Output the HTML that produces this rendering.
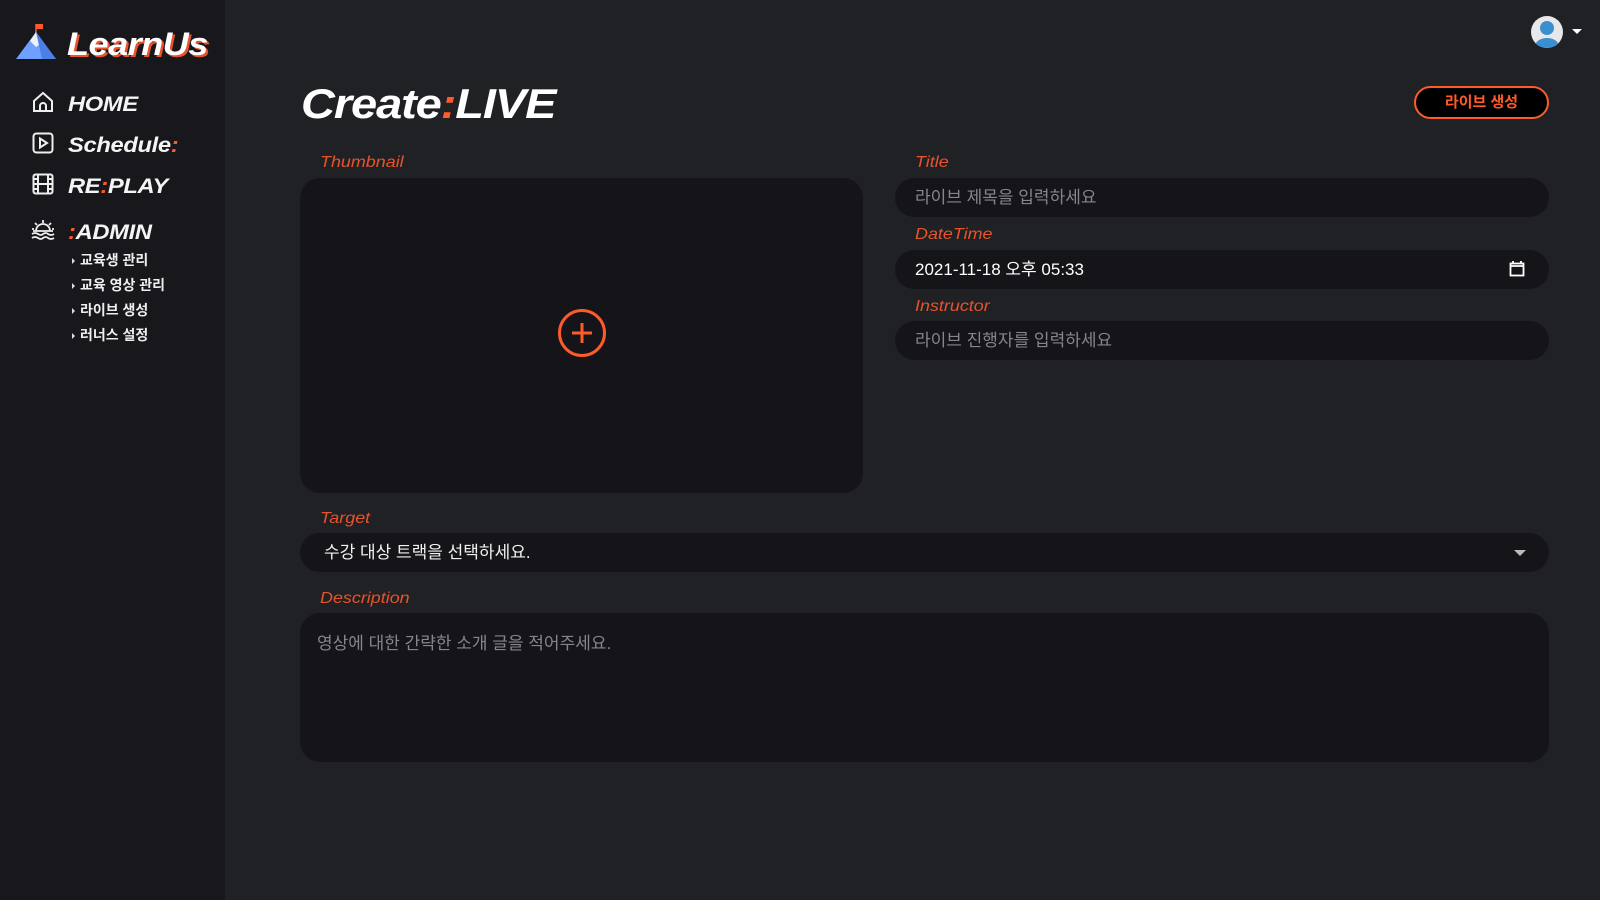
<!DOCTYPE html>
<html><head><meta charset="utf-8">
<style>
*{margin:0;padding:0;box-sizing:border-box}
body{width:1600px;height:900px;background:#202125;font-family:"Liberation Sans","Noto Sans CJK KR",sans-serif;position:relative;overflow:hidden;color:#fff}
.side{position:absolute;left:0;top:0;width:225px;height:900px;background:#18171c}
.abs{position:absolute}
.sx{transform-origin:left center}
.logo{left:67px;top:26px;font-size:32px;font-weight:900;font-style:italic;color:#fff;text-shadow:2px 2px 0 #e8532c;letter-spacing:-0.5px;transform:scaleX(1.13)}
.nav{left:68px;font-size:21px;font-weight:900;font-style:italic;color:#f4f4f4;letter-spacing:-0.3px;transform:scaleX(1.13)}
.o{color:#ff5a2a}
.sub{left:72px;font-size:14px;font-weight:bold;color:#eee}
.sub:before{content:"";display:inline-block;border-left:3px solid #ddd;border-top:3px solid transparent;border-bottom:3px solid transparent;margin-right:5px;vertical-align:middle}
.lbl{font-size:16px;font-style:italic;color:#e8532c;transform:scaleX(1.12)}
.box{background:#151419}
.inp{height:39px;border-radius:20px;font-size:17px;line-height:39px;padding-left:20px;color:#85868b}
.title{left:301px;top:80px;font-size:42px;font-weight:900;font-style:italic;color:#fff;letter-spacing:-1px;transform:scaleX(1.12)}
.btn{left:1414px;top:86px;width:135px;height:33px;border:2px solid #ff5a2a;border-radius:17px;background:#000;color:#ff5a2a;font-size:15px;font-weight:bold;text-align:center;line-height:29px}
</style></head><body>
<div class="side"></div>
<svg class="abs" style="left:16px;top:22px" width="42" height="38" viewBox="0 0 42 38">
<rect x="20" y="2" width="7" height="5" fill="#ff5a2a"/><line x1="20" y1="2" x2="20" y2="12" stroke="#ff5a2a" stroke-width="1.5"/>
<polygon points="20,10 40,37 0,37" fill="#6fa0ff"/><polygon points="20,10 27,20 20,25 14,19" fill="#f0f0f8"/><polygon points="20,10 40,37 26,37" fill="#4d7fe8"/>
</svg>
<div class="abs logo sx">LearnUs</div>

<svg class="abs" style="left:32px;top:91px" width="22" height="22" viewBox="0 0 22 22" fill="none" stroke="#eee" stroke-width="2"><path d="M2 10 L11 2 L20 10 V20 H2 Z"/><path d="M8 20 V15 a3 3 0 0 1 6 0 V20"/></svg>
<div class="abs nav sx" style="top:93px">HOME</div>
<svg class="abs" style="left:32px;top:132px" width="22" height="22" viewBox="0 0 22 22" fill="none" stroke="#eee" stroke-width="2"><rect x="1.5" y="1.5" width="19" height="19" rx="3"/><path d="M8 6.5 L15 11 L8 15.5 Z"/></svg>
<div class="abs nav sx" style="top:134px">Schedule<span class="o">:</span></div>
<svg class="abs" style="left:32px;top:173px" width="22" height="22" viewBox="0 0 22 22" fill="none" stroke="#eee" stroke-width="2"><rect x="1.5" y="1.5" width="19" height="19" rx="2"/><path d="M6 2 V20 M16 2 V20 M6 11 H16 M2 6 H6 M2 11 H6 M2 16 H6 M16 6 H20 M16 11 H20 M16 16 H20"/></svg>
<div class="abs nav sx" style="top:175px">RE<span class="o">:</span>PLAY</div>
<svg class="abs" style="left:31px;top:219px" width="24" height="22" viewBox="0 0 24 22" fill="none" stroke="#eee" stroke-width="1.8"><path d="M5 12 a7 7 0 0 1 14 0 M12 1 V4 M4 4 L6 6 M20 4 L18 6 M1 10 H3 M21 10 H23 M1 15 Q4 13 7 15 Q10 17 12 15 Q15 13 17 15 Q20 17 23 15 M1 19 Q4 17 7 19 Q10 21 12 19 Q15 17 17 19 Q20 21 23 19 M2 12 H22"/></svg>
<div class="abs nav sx" style="top:221px"><span class="o">:</span>ADMIN</div>
<div class="abs sub" style="top:250px">교육생 관리</div>
<div class="abs sub" style="top:275px">교육 영상 관리</div>
<div class="abs sub" style="top:300px">라이브 생성</div>
<div class="abs sub" style="top:325px">러너스 설정</div>

<svg class="abs" style="left:1531px;top:16px" width="60" height="33" viewBox="0 0 60 33"><circle cx="16" cy="16" r="16" fill="#e8e8ea"/><clipPath id="c"><circle cx="16" cy="16" r="16"/></clipPath><g clip-path="url(#c)" fill="#3a8fd0"><circle cx="16" cy="12" r="7"/><ellipse cx="16" cy="30" rx="12" ry="8"/></g><polygon points="41,13 51,13 46,18" fill="#fff"/></svg>

<div class="abs title sx">Create<span class="o">:</span>LIVE</div>
<div class="abs btn">라이브 생성</div>

<div class="abs lbl sx" style="left:320px;top:154px">Thumbnail</div>
<div class="abs box" style="left:300px;top:178px;width:563px;height:315px;border-radius:20px"></div>
<svg class="abs" style="left:556px;top:307px" width="52" height="52" viewBox="0 0 52 52" fill="none" stroke="#ff5a2a" stroke-width="3"><circle cx="26" cy="26" r="22.5"/><path d="M26 16 V36 M16 26 H36"/></svg>

<div class="abs lbl sx" style="left:915px;top:154px">Title</div>
<div class="abs box inp" style="left:895px;top:178px;width:654px">라이브 제목을 입력하세요</div>
<div class="abs lbl sx" style="left:915px;top:226px">DateTime</div>
<div class="abs box inp" style="left:895px;top:250px;width:654px;color:#fff">2021-11-18 오후 05:33</div>
<svg class="abs" style="left:1509px;top:260px" width="16" height="17" viewBox="0 0 16 17" fill="none" stroke="#fff" stroke-width="1.8"><rect x="1.5" y="3.5" width="13" height="12"/><path d="M1.5 6 H14.5 M4 1 V4 M12 1 V4"/></svg>
<div class="abs lbl sx" style="left:915px;top:298px">Instructor</div>
<div class="abs box inp" style="left:895px;top:321px;width:654px">라이브 진행자를 입력하세요</div>

<div class="abs lbl sx" style="left:320px;top:510px">Target</div>
<div class="abs box inp" style="left:300px;top:533px;width:1249px;color:#f0f0f0;padding-left:24px">수강 대상 트랙을 선택하세요.</div>
<svg class="abs" style="left:1514px;top:550px" width="12" height="7"><polygon points="0,0 12,0 6,6" fill="#bbb"/></svg>

<div class="abs lbl sx" style="left:320px;top:590px">Description</div>
<div class="abs box" style="left:300px;top:613px;width:1249px;height:149px;border-radius:20px;padding:16px 0 0 17px;font-size:17px;color:#85868b">영상에 대한 간략한 소개 글을 적어주세요.</div>
</body></html>
